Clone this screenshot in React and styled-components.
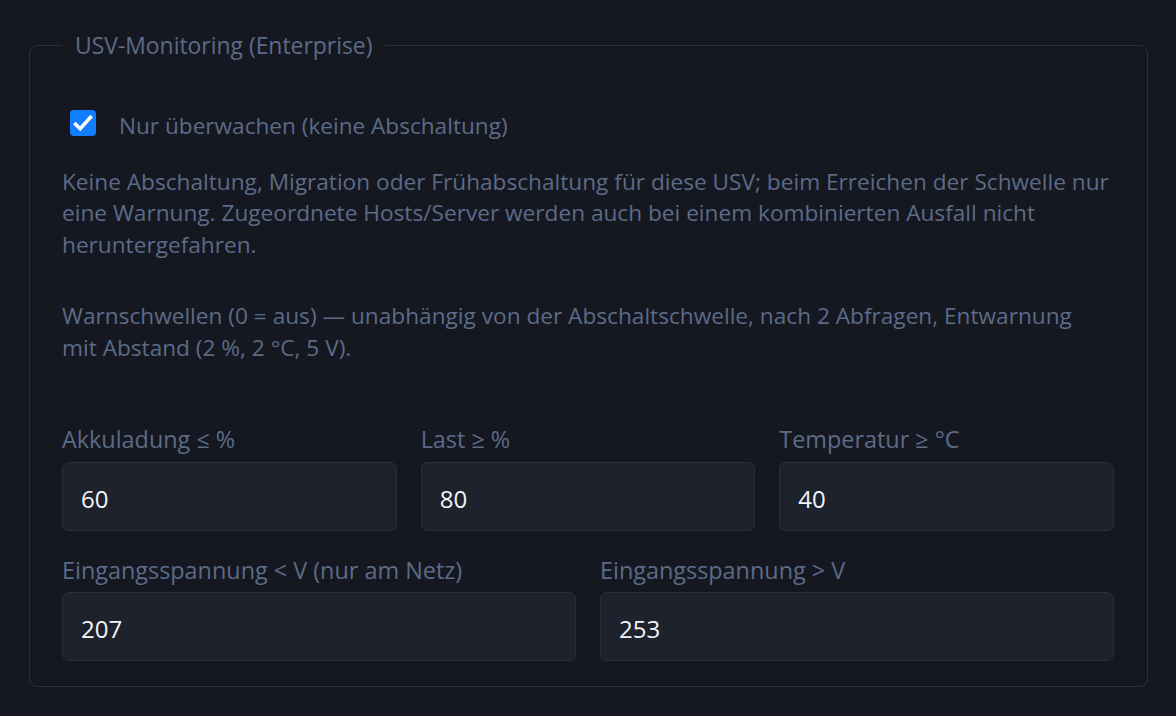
import React from "react";
import styled, { createGlobalStyle } from "styled-components";

const GlobalStyle = createGlobalStyle`
  html, body {
    margin: 0;
    background: #151820;
  }
  body {
    font-family: "Open Sans", "Noto Sans", sans-serif;
    color: #5c6b87;
  }
`;

const Page = styled.div`
  padding: 30px 28px 24px 29px;
`;

const Fieldset = styled.fieldset`
  margin: 0;
  min-width: 0;
  padding: 49px 33px 25px 32px;
  border: 1px solid #2a2f3c;
  border-radius: 8px;
`;

const Legend = styled.legend`
  padding: 0 13px;
  font-size: 22.9px;
  line-height: 31px;
  color: #5c6b87;
`;

const CheckRow = styled.label`
  display: flex;
  align-items: flex-start;
  gap: 23px;
  margin-left: 8px;
  font-size: 22.6px;
  line-height: 31.5px;
  cursor: pointer;
`;

const Box = styled.span`
  flex: none;
  width: 26px;
  height: 26px;
  border-radius: 4px;
  background: ${(p) => (p.$checked ? "#117dff" : "transparent")};
  border: ${(p) => (p.$checked ? "none" : "1px solid #3a4152")};
  box-sizing: border-box;
  display: flex;
  align-items: center;
  justify-content: center;
`;

const Text = styled.p`
  margin: ${(p) => p.$top}px 0 0;
  font-size: 22.65px;
  line-height: 31.5px;
`;

const Grid = styled.div`
  display: grid;
  grid-template-columns: repeat(${(p) => p.$cols}, minmax(0, 1fr));
  column-gap: 24px;
  margin-top: ${(p) => p.$top}px;
`;

const Field = styled.label`
  display: flex;
  flex-direction: column;
  gap: 6px;
`;

const FieldLabel = styled.span`
  font-size: 23.4px;
  line-height: 31.5px;
  white-space: nowrap;
`;

const Input = styled.input`
  box-sizing: border-box;
  width: 100%;
  height: 69px;
  padding: 4px 18px 0;
  border: 1px solid #2a2f3b;
  border-radius: 7px;
  background: #1e222d;
  color: #f2f5f9;
  font-family: inherit;
  font-size: 24px;
  outline: none;
`;

function Check({ checked }) {
  return (
    <Box $checked={checked}>
      {checked && (
        <svg width="26" height="26" viewBox="0 0 26 26" fill="none">
          <path
            d="M5.6 14.2l4.6 4.5L20.4 7.4"
            stroke="#fff"
            strokeWidth="3.6"
            strokeLinecap="square"
            strokeLinejoin="miter"
          />
        </svg>
      )}
    </Box>
  );
}

const firstRow = [
  { label: "Akkuladung ≤ %", value: "60" },
  { label: "Last ≥ %", value: "80" },
  { label: "Temperatur ≥ °C", value: "40" },
];

const secondRow = [
  { label: "Eingangsspannung < V (nur am Netz)", value: "207" },
  { label: "Eingangsspannung > V", value: "253" },
];

function Fields({ items, top }) {
  return (
    <Grid $cols={items.length} $top={top}>
      {items.map((f) => (
        <Field key={f.label}>
          <FieldLabel>{f.label}</FieldLabel>
          <Input type="text" defaultValue={f.value} />
        </Field>
      ))}
    </Grid>
  );
}

export default function App() {
  return (
    <>
      <GlobalStyle />
      <Page>
        <Fieldset>
          <Legend>USV-Monitoring (Enterprise)</Legend>
          <CheckRow>
            <Check checked />
            <span>Nur überwachen (keine Abschaltung)</span>
          </CheckRow>
          <Text $top={24}>
            Keine Abschaltung, Migration oder Frühabschaltung für diese USV; beim
            Erreichen der Schwelle nur
            <br />
            eine Warnung. Zugeordnete Hosts/Server werden auch bei einem
            kombinierten Ausfall nicht
            <br />
            heruntergefahren.
          </Text>
          <Text $top={40}>
            Warnschwellen (0 = aus) — unabhängig von der Abschaltschwelle, nach 2
            Abfragen, Entwarnung
            <br />
            mit Abstand (2 %, 2 °C, 5 V).
          </Text>
          <Fields items={firstRow} top={61} />
          <Fields items={secondRow} top={24} />
        </Fieldset>
      </Page>
    </>
  );
}
